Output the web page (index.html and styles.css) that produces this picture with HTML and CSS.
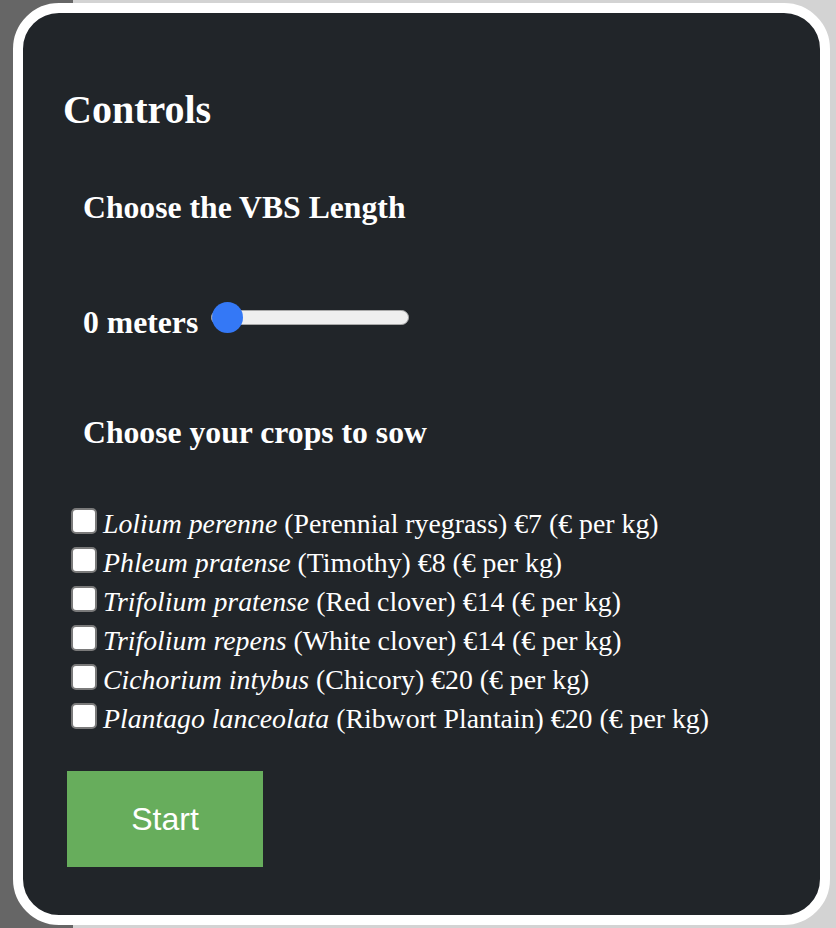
FILE: index.html
```html
<!DOCTYPE html>
<html lang="en">
<head>
<meta charset="utf-8">
<title>Controls</title>
<link rel="stylesheet" href="styles.css">
</head>
<body>
<div class="card">
  <h2 class="title">Controls</h2>
  <h3 class="subtitle">Choose the VBS Length</h3>
  <div class="length-row">
    <span class="length-label">0 meters</span>
    <input class="slider" type="range" min="0" max="100" value="0">
  </div>
  <h3 class="subtitle crops-title">Choose your crops to sow</h3>
  <div class="crops">
    <label class="crop"><input class="check" type="checkbox"><span><i>Lolium perenne</i> (Perennial ryegrass) €7 (€ per kg)</span></label>
    <label class="crop"><input class="check" type="checkbox"><span><i>Phleum pratense</i> (Timothy) €8 (€ per kg)</span></label>
    <label class="crop"><input class="check" type="checkbox"><span><i>Trifolium pratense</i> (Red clover) €14 (€ per kg)</span></label>
    <label class="crop"><input class="check" type="checkbox"><span><i>Trifolium repens</i> (White clover) €14 (€ per kg)</span></label>
    <label class="crop"><input class="check" type="checkbox"><span><i>Cichorium intybus</i> (Chicory) €20 (€ per kg)</span></label>
    <label class="crop"><input class="check" type="checkbox"><span><i>Plantago lanceolata</i> (Ribwort Plantain) €20 (€ per kg)</span></label>
  </div>
  <button class="start" type="button">Start</button>
</div>
</body>
</html>
```

FILE: styles.css
```css
html, body {
  margin: 0;
  padding: 0;
}

body {
  width: 836px;
  height: 928px;
  overflow: hidden;
  background: linear-gradient(to right, #666666 0, #666666 73px, #d3d3d3 73px);
  font-family: "Liberation Serif", "Times New Roman", serif;
  color: #ffffff;
}

.card {
  box-sizing: border-box;
  margin: 3px 0 0 13px;
  width: 817px;
  height: 922px;
  border: 10px solid #ffffff;
  border-radius: 46px;
  background: #212529;
  padding: 73px 0 0 40px;
}

.title {
  margin: 0;
  font-size: 40px;
  line-height: 48px;
  font-weight: bold;
}

.subtitle {
  margin: 54px 0 0 20px;
  font-size: 31.7px;
  line-height: 40px;
  font-weight: bold;
}

.crops-title {
  margin-top: 70px;
}

.length-row {
  display: flex;
  align-items: center;
  gap: 13px;
  margin: 75px 0 0 20px;
  height: 40px;
}

.length-label {
  font-size: 31.7px;
  line-height: 40px;
  font-weight: bold;
}

.slider {
  -webkit-appearance: none;
  appearance: none;
  margin: 0 0 12px 0;
  padding: 0;
  width: 198px;
  height: 31px;
  background: transparent;
}

.slider::-webkit-slider-runnable-track {
  box-sizing: border-box;
  height: 15px;
  border: 1px solid #a9a9a9;
  border-radius: 8px;
  background: #efefef;
}

.slider::-webkit-slider-thumb {
  -webkit-appearance: none;
  appearance: none;
  width: 31px;
  height: 31px;
  margin-top: -9px;
  border: none;
  border-radius: 50%;
  background: #3478f6;
}

.crops {
  display: flex;
  flex-direction: column;
  margin: 51px 0 0 8px;
}

.crop {
  display: flex;
  align-items: center;
  gap: 6px;
  height: 39px;
  font-size: 27.8px;
  line-height: 39px;
}

.check {
  -webkit-appearance: none;
  appearance: none;
  box-sizing: border-box;
  flex: none;
  width: 26px;
  height: 26px;
  margin: 0 0 6px 0;
  border: 2px solid #7a7a7a;
  border-radius: 5px;
  background: #ffffff;
}

.start {
  display: block;
  margin: 33px 0 0 4px;
  width: 196px;
  height: 96px;
  border: none;
  background: #67ad5c;
  color: #ffffff;
  font-family: "Liberation Sans", Arial, sans-serif;
  font-size: 32px;
  padding: 0;
}
```
